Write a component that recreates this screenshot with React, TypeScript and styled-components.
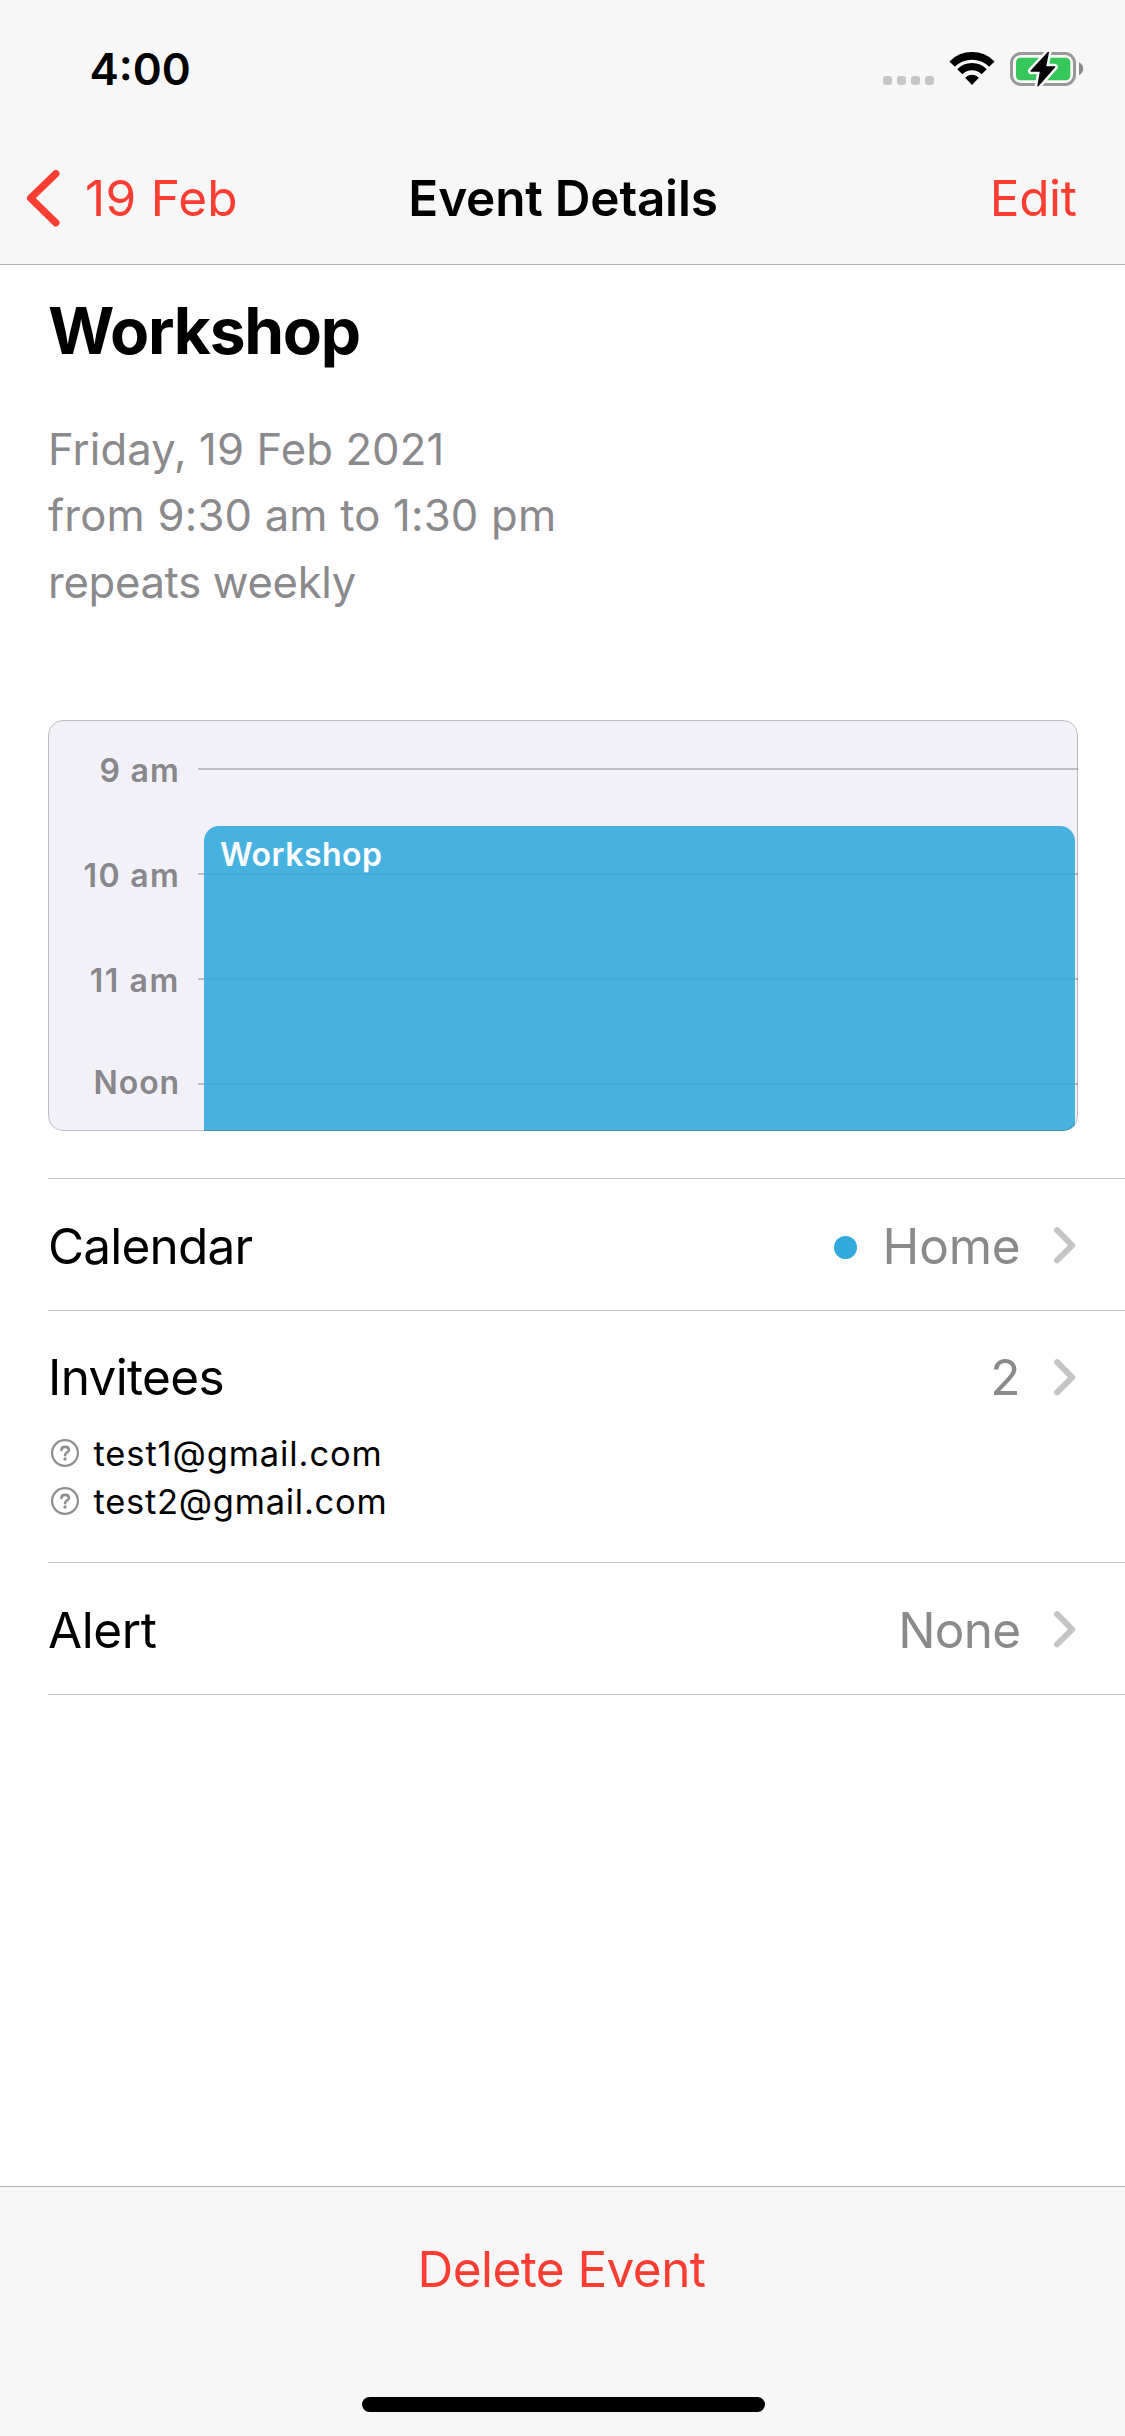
import React from "react";
import styled, { createGlobalStyle } from "styled-components";

const GlobalStyle = createGlobalStyle`
  *, *::before, *::after { box-sizing: border-box; }
  body {
    margin: 0;
    background: #fefefe;
    color: #000;
    font-family: Inter, "Liberation Sans", sans-serif;
  }
`;

const RED = "#fc3d31";
const GREY = "#8a8a8c";
const HAIRLINE = "#c6c6c8";
const CHROME = "#f7f7f7";

const Screen = styled.div`
  display: flex;
  flex-direction: column;
  width: 1125px;
  height: 2436px;
  overflow: hidden;
  background: #fefefe;
`;

/* ---------- header ---------- */

const Header = styled.header`
  flex: none;
  height: 265px;
  background: ${CHROME};
  border-bottom: 1px solid #b2b2b2;
`;

const StatusBar = styled.div`
  display: flex;
  align-items: center;
  justify-content: space-between;
  height: 132px;
  padding: 6px 41px 0 89.5px;
`;

const Clock = styled.span`
  font-size: 44px;
  font-weight: 600;
  line-height: 60px;
`;

const StatusIcons = styled.div`
  display: flex;
  align-items: center;
  gap: 15px;
`;

const SignalDots = styled.div`
  display: flex;
  gap: 5px;
  padding-top: 23px;
`;

const SignalDot = styled.i`
  width: 9px;
  height: 9px;
  border-radius: 3px;
  background: #c6c6c6;
`;

const NavBar = styled.nav`
  display: grid;
  grid-template-columns: 1fr auto 1fr;
  align-items: center;
  height: 132px;
`;

const TextButton = styled.button<{ $spacing?: number }>`
  display: inline-flex;
  align-items: center;
  padding: 0;
  border: 0;
  background: none;
  color: ${RED};
  font: 400 49.5px/80px Inter, "Liberation Sans", sans-serif;
  letter-spacing: ${(p) => p.$spacing ?? 0}px;
  white-space: nowrap;
`;

const BackButton = styled(TextButton)`
  gap: 24px;
  justify-self: start;
  margin-left: 25px;
`;

const EditButton = styled(TextButton)`
  justify-self: end;
  margin-right: 48.5px;
`;

const NavTitle = styled.h1`
  margin: 0;
  padding-left: 1px;
  font-size: 49.5px;
  font-weight: 600;
  line-height: 80px;
  letter-spacing: -0.2px;
`;

/* ---------- content ---------- */

const Content = styled.main`
  flex: 1;
  padding: 26px 0 0 48px;
`;

const EventTitle = styled.h2`
  margin: 0;
  font-size: 64px;
  font-weight: 700;
  line-height: 80px;
  letter-spacing: -1.25px;
`;

const When = styled.div`
  display: flex;
  flex-direction: column;
  height: 303px;
  margin-top: 46px;
`;

const WhenLine = styled.span<{ $spacing: number }>`
  font-size: 43.6px;
  line-height: 66.4px;
  letter-spacing: ${(p) => p.$spacing}px;
  color: ${GREY};
`;

const Timeline = styled.section`
  position: relative;
  width: 1030px;
  height: 411px;
  overflow: hidden;
  border-radius: 15px;
  background: #f2f1f7;

  &::after {
    content: "";
    position: absolute;
    inset: 0;
    border: 1px solid rgba(60, 60, 67, 0.29);
    border-radius: 15px;
  }
`;

const Hours = styled.div`
  display: flex;
  flex-direction: column;
  margin-top: -4px;
`;

const Hour = styled.div`
  display: flex;
  align-items: center;
  gap: 18px;
  height: 105px;

  &::after {
    content: "";
    flex: 1;
    height: 2px;
    background: rgba(60, 60, 67, 0.29);
  }
`;

const HourLabel = styled.span<{ $shift: number; $spacing: number }>`
  width: 132px;
  padding-top: ${(p) => Math.max(0, p.$shift) * 2}px;
  padding-bottom: ${(p) => Math.max(0, -p.$shift) * 2}px;
  text-align: right;
  font-size: 32px;
  font-weight: 600;
  line-height: 40px;
  letter-spacing: ${(p) => p.$spacing}px;
  color: #88878c;
`;

const EventBlock = styled.div`
  position: absolute;
  top: 106px;
  left: 156px;
  right: 3px;
  bottom: 0;
  padding: 13px 16px;
  border-radius: 15px 15px 0 0;
  background: rgba(52, 170, 220, 0.9);
  color: #fff;
  font-size: 32px;
  font-weight: 600;
  line-height: 32px;
  letter-spacing: 0.5px;
`;

const Rows = styled.div`
  margin-top: 47px;
  border-top: 1px solid ${HAIRLINE};
`;

const Row = styled.div<{ $bottom?: number }>`
  padding: 30px 0 ${(p) => p.$bottom ?? 30}px;
  border-bottom: 1px solid ${HAIRLINE};
`;

const RowHead = styled.div`
  display: flex;
  align-items: center;
  height: 71px;
  padding-right: 49.5px;
`;

const RowText = styled.span<{ $spacing: number; $drop: number }>`
  padding-top: ${(p) => p.$drop * 2}px;
  font-size: 49.5px;
  line-height: 60px;
  letter-spacing: ${(p) => p.$spacing}px;
`;

const RowLabel = styled(RowText)`
  flex: 1;
`;

const RowValue = styled(RowText)`
  display: flex;
  align-items: center;
  gap: 26px;
  margin-right: 33px;
  color: ${GREY};
`;

const CalendarDot = styled.i`
  width: 23px;
  height: 23px;
  margin-top: 2px;
  border-radius: 50%;
  background: #34aadc;
`;

const Invitees = styled.ul`
  margin: 17px 0 0;
  padding: 0 0 0 3px;
  list-style: none;
`;

const Invitee = styled.li<{ $spacing: number }>`
  display: flex;
  align-items: center;
  gap: 14.5px;
  height: 48px;
  font-size: 34.5px;
  letter-spacing: ${(p) => p.$spacing}px;
`;

/* ---------- footer ---------- */

const Footer = styled.footer`
  display: flex;
  flex: none;
  flex-direction: column;
  align-items: center;
  justify-content: space-between;
  height: 250px;
  padding: 42px 0 24px;
  border-top: 1px solid #b2b2b2;
  background: ${CHROME};
`;

const DeleteButton = styled(TextButton)`
  margin-right: 2px;
`;

const HomeIndicator = styled.div`
  width: 403px;
  height: 15px;
  margin-left: 2px;
  border-radius: 8px;
  background: #000;
`;

/* ---------- icons ---------- */

const WifiIcon = () => (
  <svg width="46" height="34" viewBox="0 0 46 34" fill="none" stroke="#000">
    <path d="M3.13 12.13A28.1 28.1 0 0 1 42.87 12.13" strokeWidth="7.7" />
    <path d="M10.77 19.77A17.3 17.3 0 0 1 35.23 19.77" strokeWidth="7.3" />
    <path d="M16.6 25.8A9.3 9.3 0 0 1 29.4 25.8L23 32.4Z" fill="#000" strokeWidth="1" strokeLinejoin="round" />
  </svg>
);

const BOLT = "M38.3 1.4L21.2 20H30.6L28 34.8L44.6 15.9H35.4Z";

const BatteryIcon = () => (
  <svg width="74" height="36" viewBox="0 0 74 36" fill="none" overflow="visible">
    <rect x="1.5" y="2.5" width="63" height="31" rx="9.5" stroke="#989898" strokeWidth="3" />
    <rect x="6" y="6.8" width="54.3" height="22.5" rx="4.5" fill="#35c759" />
    <path d="M69 11.5C71.8 12.6 73.2 15 73.2 17.8S71.8 23 69 24.1Z" fill="#8c8c8c" />
    <path d={BOLT} fill={CHROME} stroke={CHROME} strokeWidth="6.5" strokeLinejoin="round" />
    <path d={BOLT} fill="#000" stroke="#000" strokeWidth="1.4" strokeLinejoin="round" />
  </svg>
);

const BackIcon = () => (
  <svg width="36" height="57" viewBox="0 0 36 57" fill="none" stroke={RED} strokeWidth="7.2" strokeLinecap="round" strokeLinejoin="round">
    <path d="M30.9 3.6L5.6 28.2L30.9 52.8" />
  </svg>
);

const ChevronIcon = () => (
  <svg width="22" height="39" viewBox="0 0 22 39" fill="none" stroke="#c5c5c7" strokeWidth="6" strokeLinecap="round" strokeLinejoin="round">
    <path d="M3.1 5.2L18.2 20.3L3.1 35.4" />
  </svg>
);

const UnknownIcon = () => (
  <svg width="28" height="28" viewBox="0 0 28 28" fill="none" stroke="#8f8f90" strokeWidth="2.2">
    <circle cx="14" cy="14" r="12.9" />
    <path d="M10.4 11C10.5 9 12 7.9 14.1 7.9C16.4 7.9 17.9 9.1 17.9 10.9C17.9 13.5 14 13.6 14 16.2" strokeWidth="2.6" strokeLinecap="round" />
    <circle cx="14" cy="19.9" r="1.7" fill="#8f8f90" stroke="none" />
  </svg>
);

/* ---------- data ---------- */

const when = [
  { text: "Friday, 19 Feb 2021", spacing: 0.13 },
  { text: "from 9:30 am to 1:30 pm", spacing: 0.2 },
  { text: "repeats weekly", spacing: -0.3 },
];

const hours = [
  { label: "9 am", shift: 2, spacing: 1.2 },
  { label: "10 am", shift: 2, spacing: 1.3 },
  { label: "11 am", shift: 2, spacing: 1.6 },
  { label: "Noon", shift: -1, spacing: 0.9 },
];

const invitees = [
  { email: "test1@gmail.com", spacing: 0.88 },
  { email: "test2@gmail.com", spacing: 0.73 },
];

export default function App() {
  return (
    <>
      <GlobalStyle />
      <Screen>
        <Header>
          <StatusBar>
            <Clock>4:00</Clock>
            <StatusIcons>
              <SignalDots>
                <SignalDot />
                <SignalDot />
                <SignalDot />
                <SignalDot />
              </SignalDots>
              <WifiIcon />
              <BatteryIcon />
            </StatusIcons>
          </StatusBar>
          <NavBar>
            <BackButton $spacing={0.3}>
              <BackIcon />
              19 Feb
            </BackButton>
            <NavTitle>Event Details</NavTitle>
            <EditButton $spacing={-0.4}>Edit</EditButton>
          </NavBar>
        </Header>

        <Content>
          <EventTitle>Workshop</EventTitle>
          <When>
            {when.map((line) => (
              <WhenLine key={line.text} $spacing={line.spacing}>
                {line.text}
              </WhenLine>
            ))}
          </When>

          <Timeline>
            <Hours>
              {hours.map((hour) => (
                <Hour key={hour.label}>
                  <HourLabel $shift={hour.shift} $spacing={hour.spacing}>
                    {hour.label}
                  </HourLabel>
                </Hour>
              ))}
            </Hours>
            <EventBlock>Workshop</EventBlock>
          </Timeline>

          <Rows>
            <Row>
              <RowHead>
                <RowLabel $spacing={-0.8} $drop={1.5}>Calendar</RowLabel>
                <RowValue $spacing={-0.18} $drop={1.5}>
                  <CalendarDot />
                  Home
                </RowValue>
                <ChevronIcon />
              </RowHead>
            </Row>
            <Row $bottom={37}>
              <RowHead>
                <RowLabel $spacing={-0.65} $drop={0.5}>Invitees</RowLabel>
                <RowValue $spacing={0} $drop={0.5}>2</RowValue>
                <ChevronIcon />
              </RowHead>
              <Invitees>
                {invitees.map((invitee) => (
                  <Invitee key={invitee.email} $spacing={invitee.spacing}>
                    <UnknownIcon />
                    {invitee.email}
                  </Invitee>
                ))}
              </Invitees>
            </Row>
            <Row>
              <RowHead>
                <RowLabel $spacing={-0.4} $drop={1.5}>Alert</RowLabel>
                <RowValue $spacing={-0.7} $drop={1.5}>None</RowValue>
                <ChevronIcon />
              </RowHead>
            </Row>
          </Rows>
        </Content>

        <Footer>
          <DeleteButton $spacing={-0.58}>Delete Event</DeleteButton>
          <HomeIndicator />
        </Footer>
      </Screen>
    </>
  );
}
